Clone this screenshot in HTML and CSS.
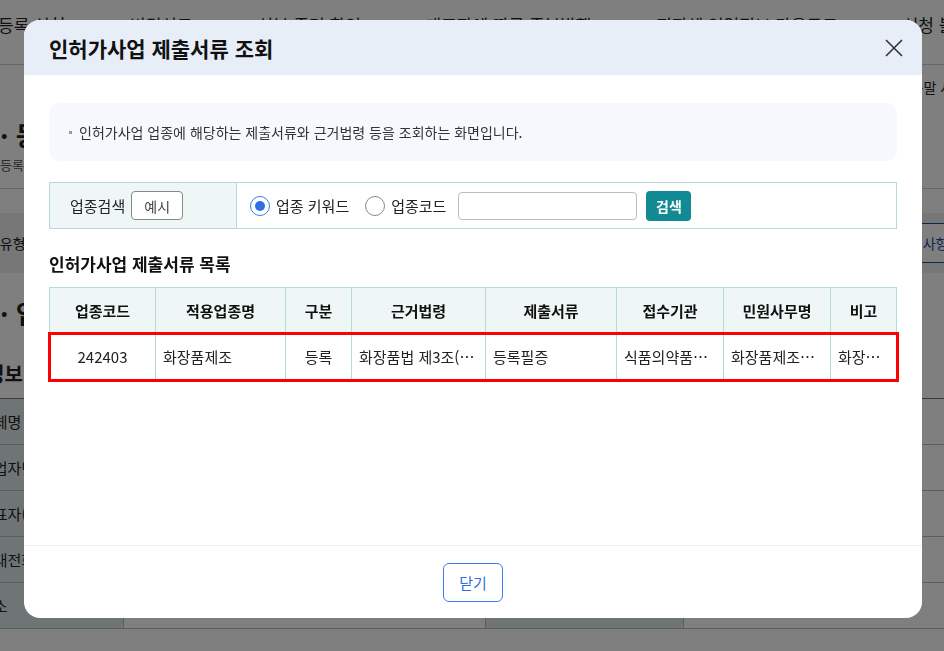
FILE: index.html
```html
<!DOCTYPE html>
<html lang="ko">
<head>
    <meta charset="UTF-8">
    <meta name="viewport" content="width=device-width, initial-scale=1.0">
    <title>인허가사업 제출서류 조회</title>
    <link rel="stylesheet" href="styles.css">
</head>
<body>
    <div class="page">
        <ul class="gnb">
            <li>등록.신청</li>
            <li>변경신고</li>
            <li>신분 증명 확인</li>
            <li>대표자에 따른 중복발행</li>
            <li>지자체 영업정보 다운로드</li>
            <li>신청 불복</li>
        </ul>
        <div class="util"><span>도움말 사용</span></div>
        <div class="sectHead">
            <h2>· 등록신청</h2>
            <p>등록을 신청하는 화면입니다.</p>
        </div>
        <div class="typeBar">
            <span class="typeLabel">신청유형</span>
            <button class="addBtn">추가 사항</button>
        </div>
        <h2 class="inputTitle">· 입력사항</h2>
        <h3 class="subTitle">정보</h3>
        <table class="formTable">
            <tr><th>업체명</th><td></td><th></th><td></td></tr>
            <tr><th>사업자번호</th><td></td><th></th><td></td></tr>
            <tr><th>대표자(대표자)</th><td></td><th></th><td></td></tr>
            <tr><th>휴대전화</th><td></td><th></th><td></td></tr>
            <tr><th>주소</th><td></td><th></th><td></td></tr>
        </table>
    </div>

    <div class="dim">
        <div class="modal">
            <div class="modalHead">
                <h1>인허가사업 제출서류 조회</h1>
                <button class="close" aria-label="닫기">
                    <svg width="18" height="18" viewBox="0 0 18 18">
                        <path d="M1 1 L17 17 M17 1 L1 17" stroke="#333" stroke-width="1.6" fill="none"/>
                    </svg>
                </button>
            </div>

            <div class="modalBody">
                <div class="guide">
                    <span class="dot"></span>
                    인허가사업 업종에 해당하는 제출서류와 근거법령 등을 조회하는 화면입니다.
                </div>

                <div class="searchBox">
                    <div class="searchLabel">
                        업종검색
                        <button class="sample">예시</button>
                    </div>
                    <div class="searchField">
                        <label class="radio"><span class="mark on"></span>업종 키워드</label>
                        <label class="radio"><span class="mark"></span>업종코드</label>
                        <input class="keyword" type="text">
                        <button class="searchBtn">검색</button>
                    </div>
                </div>

                <h4 class="listTitle">인허가사업 제출서류 목록</h4>

                <table class="docTable">
                    <colgroup>
                        <col style="width:106px">
                        <col style="width:130px">
                        <col style="width:66px">
                        <col style="width:134px">
                        <col style="width:131px">
                        <col style="width:107px">
                        <col style="width:107px">
                        <col>
                    </colgroup>
                    <thead>
                        <tr>
                            <th>업종코드</th>
                            <th>적용업종명</th>
                            <th>구분</th>
                            <th>근거법령</th>
                            <th>제출서류</th>
                            <th>접수기관</th>
                            <th>민원사무명</th>
                            <th>비고</th>
                        </tr>
                    </thead>
                    <tbody>
                        <tr class="selected">
                            <td class="center">242403</td>
                            <td>화장품제조</td>
                            <td class="center">등록</td>
                            <td>화장품법 제3조(제조업 등록)</td>
                            <td>등록필증</td>
                            <td>식품의약품안전처</td>
                            <td>화장품제조업 등록</td>
                            <td>화장품제조업</td>
                        </tr>
                    </tbody>
                </table>
            </div>

            <div class="modalFoot">
                <button class="closeBtn">닫기</button>
            </div>
        </div>
    </div>
</body>
</html>
```

FILE: styles.css
```css
body {
    margin: 0;
    font-family: "Noto Sans CJK KR", "Noto Sans", sans-serif;
    color: #222;
    background: #fff;
    overflow: hidden;
}
button {
    font-family: inherit;
    cursor: pointer;
}

/* page behind the popup */
.page {
    width: 1000px;
    margin-left: -30px;
}
.gnb {
    list-style: none;
    margin: 0;
    padding: 12px 0 0 28px;
    height: 52px;
    display: flex;
    justify-content: space-between;
    font-size: 17px;
    border-bottom: 1px solid #ccc;
}
.util {
    text-align: right;
    font-size: 14px;
    padding: 12px 4px 0 0;
    height: 30px;
}
.sectHead {
    padding: 10px 0 14px 30px;
    border-bottom: 1px solid #ccc;
}
.sectHead h2 {
    margin: 0;
    font-size: 26px;
    line-height: 36px;
}
.sectHead p {
    margin: 2px 0 0;
    font-size: 13px;
    color: #555;
}
.typeBar {
    margin-top: 24px;
    height: 60px;
    background: #eee;
    display: flex;
    align-items: center;
    justify-content: space-between;
    padding-left: 30px;
    font-size: 14px;
}
.typeLabel {
    margin-left: -26px;
}
.addBtn {
    height: 40px;
    width: 80px;
    margin-right: 4px;
    background: #fff;
    border: 1px solid #1d4fa3;
    color: #1d4fa3;
    font-size: 14px;
    text-align: left;
}
.inputTitle {
    margin: 22px 0 0 30px;
    font-size: 26px;
    line-height: 36px;
}
.subTitle {
    margin: 28px 0 10px 16px;
    font-size: 20px;
}
.formTable {
    width: 1000px;
    border-collapse: collapse;
    border-top: 1px solid #777;
    font-size: 15px;
}
.formTable th,
.formTable td {
    height: 45px;
    border-bottom: 1px solid #bbb;
    padding: 0;
}
.formTable th {
    background: #dfe8e8;
    font-weight: normal;
    text-align: left;
    padding-left: 10px;
    width: 143px;
    border-right: 1px solid #bbb;
}
.formTable th:nth-child(3) {
    width: 187px;
}
.formTable td {
    border-right: 1px solid #bbb;
}
.formTable td:nth-child(2) {
    width: 361px;
}

/* popup */
.dim {
    position: fixed;
    inset: 0;
    background: rgba(0, 0, 0, 0.5);
    display: flex;
    align-items: flex-start;
    padding: 20px 0 0 24px;
}
.modal {
    width: 898px;
    height: 598px;
    background: #fff;
    border-radius: 16px;
    overflow: hidden;
    display: flex;
    flex-direction: column;
}
.modalHead {
    height: 55px;
    flex: none;
    background: #e7eef8;
    display: flex;
    align-items: center;
    justify-content: space-between;
    padding: 0 19px 0 25px;
}
.modalHead h1 {
    margin: 0;
    font-size: 21px;
    font-weight: bold;
    color: #111;
}
.close {
    border: 0;
    background: none;
    padding: 0;
    width: 18px;
    height: 18px;
    display: flex;
}
.modalBody {
    flex: 1;
    padding: 28px 25px 0;
}
.guide {
    height: 58px;
    background: #f6f8fd;
    border-radius: 10px;
    display: flex;
    align-items: center;
    padding-left: 20px;
    font-size: 14px;
    color: #333;
}
.dot {
    width: 3px;
    height: 3px;
    background: #999;
    margin-right: 7px;
}
.searchBox {
    margin-top: 21px;
    height: 45px;
    border: 1px solid #b7d8dc;
    display: flex;
}
.searchLabel {
    width: 166px;
    background: #eef7f6;
    border-right: 1px solid #b7d8dc;
    display: flex;
    align-items: center;
    padding-left: 20px;
    font-size: 15px;
}
.sample {
    margin-left: 6px;
    width: 52px;
    height: 29px;
    border: 1px solid #888;
    border-radius: 4px;
    background: #fff;
    color: #444;
    font-size: 14px;
}
.searchField {
    flex: 1;
    display: flex;
    align-items: center;
    padding-left: 13px;
    font-size: 15px;
}
.radio {
    display: flex;
    align-items: center;
    margin-right: 16px;
}
.radio + .radio {
    margin-right: 12px;
}
.mark {
    width: 18px;
    height: 18px;
    border: 1px solid #888;
    border-radius: 50%;
    margin-right: 6px;
    display: flex;
    align-items: center;
    justify-content: center;
}
.mark.on {
    border-color: #3b7ce8;
}
.mark.on::after {
    content: "";
    width: 10px;
    height: 10px;
    border-radius: 50%;
    background: #2f6fe0;
}
.keyword {
    width: 177px;
    height: 26px;
    border: 1px solid #bbb;
    border-radius: 4px;
    padding: 0;
}
.searchBtn {
    margin-left: 9px;
    width: 45px;
    height: 30px;
    border: 0;
    border-radius: 4px;
    background: #118a93;
    color: #fff;
    font-size: 14px;
    font-weight: bold;
}
.listTitle {
    margin: 23px 0 11px;
    font-size: 17px;
    line-height: 24px;
    color: #111;
}
.docTable {
    width: 848px;
    table-layout: fixed;
    border-collapse: collapse;
    font-size: 15px;
}
.docTable th,
.docTable td {
    height: 45px;
    border: 1px solid #b7d8dc;
    padding: 0 7px;
    white-space: nowrap;
    overflow: hidden;
    text-overflow: ellipsis;
}
.docTable th {
    background: #eef7f6;
    font-weight: bold;
    color: #111;
}
.docTable td {
    color: #222;
}
.docTable .center {
    text-align: center;
}
.docTable tr.selected {
    outline: 3px solid #f00;
    outline-offset: -1px;
}
.modalFoot {
    flex: none;
    height: 72px;
    border-top: 1px solid #e8eef8;
    display: flex;
    justify-content: center;
    align-items: center;
}
.closeBtn {
    width: 60px;
    height: 39px;
    border: 1px solid #3b7ce8;
    border-radius: 6px;
    background: #fff;
    color: #2f6fe0;
    font-size: 15px;
}
```
